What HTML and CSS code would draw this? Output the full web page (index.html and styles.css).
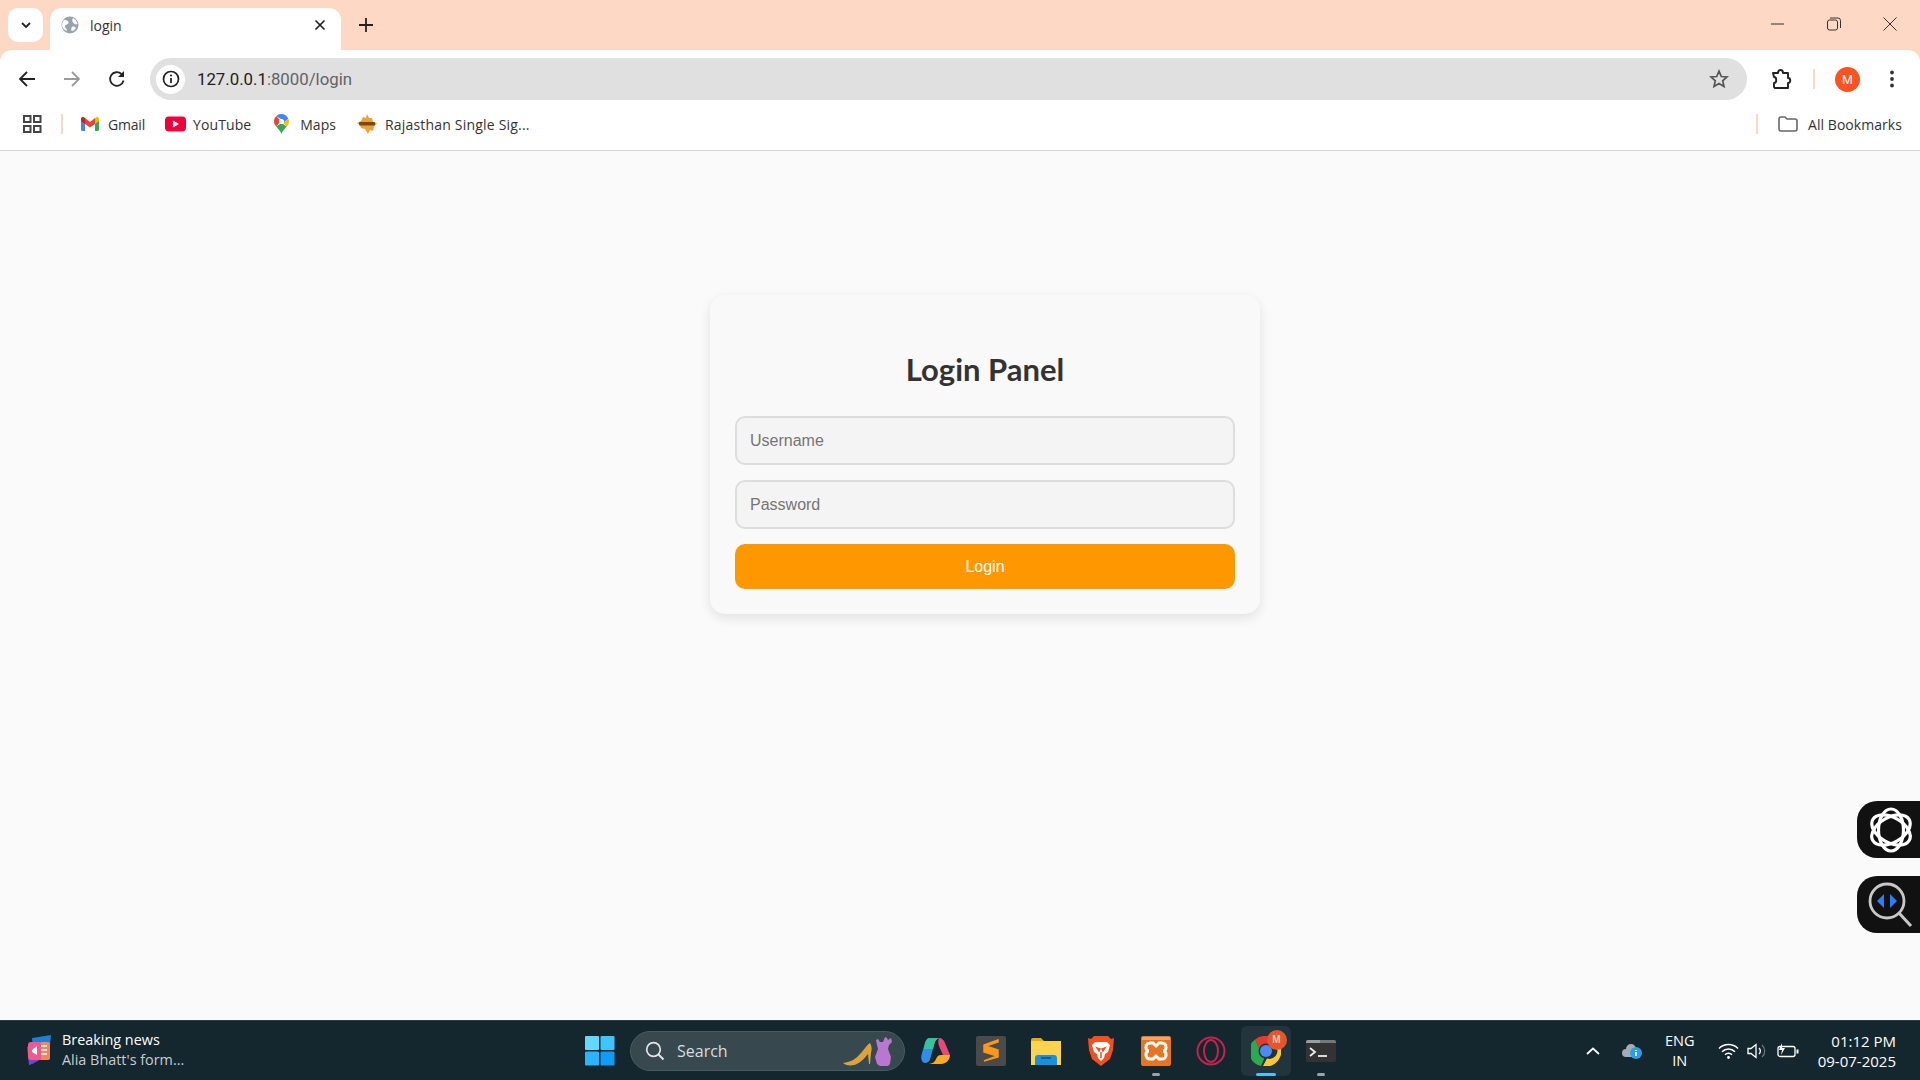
FILE: index.html
```html
<!DOCTYPE html>
<html lang="en">
<head>
<meta charset="utf-8">
<title>login</title>
<link rel="stylesheet" href="styles.css">
</head>
<body>
<div class="browser">
  <header class="tabstrip">
    <button class="tab-search"><svg width="12" height="12" viewBox="0 0 12 12"><path d="M2 4l4 4 4-4" fill="none" stroke="#222" stroke-width="1.8"/></svg></button>
    <div class="tab">
      <svg class="tab-fav" width="18" height="18" viewBox="0 0 18 18"><circle cx="9" cy="9" r="8.500" fill="#9aa3ad"/><path d="M3 4c3 0 5 1 4.500 3s-3 1-3.500 3 2 2 2 5c-3-1-5-3-5-6 0-2 1-4 2-5zM12 2c2 1 4 3 4.500 6-2 1-3 0-4-1s-2-3-.5-5zM11 11c2-1 3 0 4 1-1 2-3 3-4 3s-1-3 0-4z" fill="#fff"/></svg>
      <span class="tab-title">login</span>
      <svg class="tab-close" width="12" height="12" viewBox="0 0 12 12"><path d="M1.500 1.500l9 9M10.500 1.500l-9 9" stroke="#222" stroke-width="1.700"/></svg>
    </div>
    <svg class="new-tab" width="14" height="14" viewBox="0 0 14 14"><path d="M7 0v14M0 7h14" stroke="#222" stroke-width="1.800"/></svg>
    <div class="window-controls">
      <svg width="14" height="14" viewBox="0 0 14 14"><path d="M0 7h13" stroke="#333" stroke-width="1"/></svg>
      <svg width="14" height="14" viewBox="0 0 14 14"><rect x=".5" y="3" width="10" height="10" rx="2" fill="none" stroke="#333"/><path d="M3 1h8a2.500 2.500 0 0 1 2.500 2.500V11" fill="none" stroke="#333"/></svg>
      <svg width="14" height="14" viewBox="0 0 14 14"><path d="M.5.500l13 13M13.500.500l-13 13" stroke="#333" stroke-width="1"/></svg>
    </div>
  </header>

  <div class="toolbar">
    <svg class="nav-icon" width="18" height="18" viewBox="0 0 18 18"><path d="M17 9H2M9 2L2 9l7 7" fill="none" stroke="#222" stroke-width="1.800"/></svg>
    <svg class="nav-icon" width="18" height="18" viewBox="0 0 18 18"><path d="M1 9h15M9 2l7 7-7 7" fill="none" stroke="#9b9b9b" stroke-width="1.800"/></svg>
    <svg class="nav-icon" width="18" height="18" viewBox="0 0 18 18"><path d="M15.500 10.500A6.800 6.800 0 1 1 13.500 4" fill="none" stroke="#222" stroke-width="1.800"/><path d="M16 1v6h-6z" fill="#222"/></svg>
    <div class="omnibox">
      <span class="site-info"><svg width="18" height="18" viewBox="0 0 18 18"><circle cx="9" cy="9" r="7.500" fill="none" stroke="#222" stroke-width="1.700"/><path d="M9 8v5" stroke="#222" stroke-width="1.800"/><circle cx="9" cy="5.500" r="1.100" fill="#222"/></svg></span>
      <span class="url"><span class="url-host">127.0.0.1</span>:8000/login</span>
      <svg class="star" width="20" height="20" viewBox="0 0 20 20"><path d="M10 2.200l2.300 5.300 5.700.5-4.300 3.800 1.300 5.600-5-3-5 3 1.300-5.600L2 8l5.700-.5z" fill="none" stroke="#555" stroke-width="1.700"/></svg>
    </div>
    <svg class="ext" width="22" height="22" viewBox="0 0 22 22"><path d="M2 5h5c0-4 5-4 5 0h5v5c3 0 3 5 0 5v5H4l-1-1v-4c3 0 3-6 0-6z" fill="none" stroke="#222" stroke-width="1.900" stroke-linejoin="round"/></svg>
    <span class="tool-divider"></span>
    <span class="avatar">M</span>
    <svg class="dots" width="6" height="18" viewBox="0 0 6 18"><circle cx="3" cy="2.500" r="1.900" fill="#333"/><circle cx="3" cy="9" r="1.900" fill="#333"/><circle cx="3" cy="15.500" r="1.900" fill="#333"/></svg>
  </div>

  <nav class="bookmarks">
    <svg class="apps" width="19" height="18" viewBox="0 0 19 18"><g fill="none" stroke="#444" stroke-width="2"><rect x="1" y="1" width="6.500" height="6"/><rect x="11" y="1" width="6.500" height="6"/><rect x="1" y="11" width="6.500" height="6"/><rect x="11" y="11" width="6.500" height="6"/></g></svg>
    <span class="bm-divider"></span>
    <a class="bm bm-gmail"><svg width="18" height="14" viewBox="0 0 18 14"><path d="M0 2v10.500A1.500 1.500 0 0 0 1.500 14H4V6z" fill="#4285f4"/><path d="M18 2v10.500a1.500 1.500 0 0 1-1.500 1.500H14V6z" fill="#34a853"/><path d="M14 1v6l4-3V2c0-2-2-2.500-3-1.500z" fill="#fbbc04"/><path d="M4 1v6l5 3.500L14 7V1L9 5z" fill="#ea4335"/><path d="M0 2v2l4 3V1L3 .5C2-.5 0 0 0 2z" fill="#c5221f"/></svg>Gmail</a>
    <a class="bm bm-yt"><svg width="21" height="16" viewBox="0 0 21 16"><rect width="21" height="15" y=".5" rx="4" fill="#f0003c"/><path d="M8 4.500l6 3.500-6 3.500z" fill="#fff"/></svg>YouTube</a>
    <a class="bm bm-maps"><svg width="15" height="20" viewBox="0 0 15 20"><path d="M2.200 12.500C4 15 6.500 16.500 7.500 20c1-3.500 3.500-5.500 5.300-7.500L7.500 9z" fill="#34a853"/><path d="M12.800 12.500C14 11 15 9.500 15 7.500c0-1-.3-2-.8-3L9 9z" fill="#fbbc04"/><path d="M2.200 2.300C.8 3.600 0 5.500 0 7.500c0 2 .9 3.500 2.200 5L7 7z" fill="#ea4335"/><path d="M2.200 2.300C3.500.9 5.400 0 7.500 0c3 0 5.500 1.800 6.700 4.500L9 9 7 5z" fill="#4285f4"/><circle cx="7.500" cy="7.500" r="2.600" fill="#fff"/></svg>Maps</a>
    <a class="bm bm-raj"><svg width="20" height="20" viewBox="0 0 20 20"><path d="M10 0l2 4 3 0 1 4 4 1-3 4-1 4-3-1-2 4-3-5-4-1-1-3-3-2 4-2 2-4 3 1z" fill="#e8a33a"/><rect x="2" y="8" width="16" height="3.500" rx="1" fill="#7a4a12"/></svg>Rajasthan Single Sig...</a>
    <span class="bm-spacer"></span>
    <span class="bm-divider"></span>
    <a class="bm bm-all"><svg width="20" height="16" viewBox="0 0 20 16"><path d="M1 3a2 2 0 0 1 2-2h4l2 2h8a2 2 0 0 1 2 2v8a2 2 0 0 1-2 2H3a2 2 0 0 1-2-2z" fill="none" stroke="#666" stroke-width="1.600"/></svg>All Bookmarks</a>
  </nav>
</div>

<main class="page">
  <form class="card">
    <h1 class="card-title">Login Panel</h1>
    <input class="field" type="text" placeholder="Username">
    <input class="field" type="password" placeholder="Password">
    <button class="submit" type="button">Login</button>
  </form>
  <div class="floaters">
    <div class="floater">
      <svg width="46" height="46" viewBox="0 0 46 46"><g fill="none" stroke="#fff" stroke-width="3.200"><ellipse cx="23" cy="23" rx="21" ry="12.500" transform="rotate(90 23 23)"/><ellipse cx="23" cy="23" rx="21" ry="12.500" transform="rotate(30 23 23)"/><ellipse cx="23" cy="23" rx="21" ry="12.500" transform="rotate(150 23 23)"/></g></svg>
    </div>
    <div class="floater">
      <svg width="46" height="46" viewBox="0 0 46 46"><circle cx="19" cy="19" r="17" fill="none" stroke="#c8c8c8" stroke-width="2.800"/><path d="M31 31l12 13" stroke="#c8c8c8" stroke-width="3"/><path d="M16 12l-7 7 7 7zM22 12l7 7-7 7z" fill="#2f7cf6"/></svg>
    </div>
  </div>
</main>

<footer class="taskbar">
  <div class="news">
    <svg width="26" height="32" viewBox="0 0 26 32"><path d="M6 3l19-3-2 20-15 3z" fill="#1e7fd6"/><path d="M1 12l5-2 2 18-5 2z" fill="#6d48d8"/><path d="M3 25l16-3-11 6-5 2z" fill="#6d48d8"/><rect x="2" y="7" width="22" height="18" rx="3" fill="#ee5a8c"/><path d="M15 7h7a2 2 0 0 1 2 2v14a2 2 0 0 1-2 2h-7z" fill="#f4845a"/><path d="M6 15l5-4v9l-5-3z" fill="#fff"/><path d="M15 11h6M15 15h6M15 19h6" stroke="#fff" stroke-width="1.600"/></svg>
    <div class="news-text">
      <span class="news-head">Breaking news</span>
      <span class="news-sub">Alia Bhatt's form...</span>
    </div>
  </div>
  <div class="task-center">
    <span class="task-slot"><svg width="30" height="30" viewBox="0 0 30 30"><rect width="14" height="14" rx="1" fill="#63d9ff"/><rect x="15.500" width="14" height="14" rx="1" fill="#3fc4fb"/><rect y="15.500" width="14" height="14" rx="1" fill="#2cb4fa"/><rect x="15.500" y="15.500" width="14" height="14" rx="1" fill="#0f9cf5"/></svg></span>
    <div class="searchbox">
      <svg width="20" height="20" viewBox="0 0 20 20"><circle cx="8.500" cy="8.500" r="6.800" fill="none" stroke="#e4e4e4" stroke-width="1.700"/><path d="M13.500 13.500l5 5" stroke="#e4e4e4" stroke-width="1.900"/></svg>
      <span class="search-label">Search</span>
      <svg class="search-art" width="50" height="32" viewBox="0 0 50 32"><path d="M0 28c8-1 13-4 18-10 4-5 7-9 9-10 2 3 2 7 1 10l-1 11h-1l-1-10c-4 5-9 10-14 11-5 1-9 0-11-2z" fill="#dba33c"/><path d="M33 5l2-1 2 3h3l2-5 2 1 1 2 3-2 1 4-3 3-1 4 3 8-1 7-2 2h-8l-3-2-2-7 3-8-1-4z" fill="#b878d0"/></svg>
    </div>
    <span class="task-slot"><svg width="30" height="28" viewBox="0 0 30 28"><path d="M9 1h9c-3 1-4 3-5 7l-3 11c-1 5-3 7-6 7C1 26-1 22 1 16L4 6c1-3 2-5 5-5z" fill="#2f8fe8"/><path d="M9 1h9c-3 1-4 3-5 7l-1 4H3l1-6c1-3 2-5 5-5z" fill="#38c49a"/><path d="M18 1c3 0 5 2 6 5l5 12h-7l-4-9c-1-3-1-6 0-8z" fill="#e84a78"/><path d="M6 27h14c5 0 9-4 9-9h-9c-3 0-4 2-5 4-1 3-4 5-9 5z" fill="#f7a928"/></svg></span>
    <span class="task-slot"><svg width="30" height="30" viewBox="0 0 30 30"><rect width="30" height="30" rx="2" fill="#4a4a4a"/><path d="M22 4L8 9v7l13 4-13 5 14-4v-7L10 10l12-4z" fill="#f8981d" stroke="#f8981d" stroke-width="1.500"/></svg></span>
    <span class="task-slot"><svg width="32" height="28" viewBox="0 0 32 28"><path d="M1 3a2 2 0 0 1 2-2h8l3 3h15a2 2 0 0 1 2 2v4H1z" fill="#e3a91c"/><rect x="1" y="4" width="30" height="24" fill="#ffd34e"/><path d="M5 28V21a3 3 0 0 1 3-3h16a3 3 0 0 1 3 3v7z" fill="#1a90d8"/><rect x="11" y="20" width="10" height="2" fill="#0a5fa8"/></svg></span>
    <span class="task-slot"><svg width="26" height="30" viewBox="0 0 26 30"><path d="M6 0h14l3 3 3-1-1 12-3 9-9 7-9-7-3-9L0 2l3 1z" fill="#f4501e"/><path d="M7 6h12l3 3-2 7-3 2-1 4-3 3-3-3-1-4-3-2-2-7z" fill="#fff"/><path d="M9 12l3 1-1 2zM17 12l-3 1 1 2zM13 16v6" stroke="#f4501e" stroke-width="1.500" fill="none"/></svg></span>
    <span class="task-slot"><svg width="30" height="30" viewBox="0 0 30 30"><rect width="30" height="30" rx="2" fill="#e8751f"/><rect x="1" y="1" width="28" height="3" fill="#f1a36b"/><path d="M9 7h3l3 3 3-3h3a4 4 0 0 1 4 4v1a3 3 0 0 1-3 3 3 3 0 0 1 3 3v1a4 4 0 0 1-4 4h-3l-3-3-3 3H9a4 4 0 0 1-4-4v-1a3 3 0 0 1 3-3 3 3 0 0 1-3-3v-1a4 4 0 0 1 4-4z" fill="none" stroke="#fff" stroke-width="3"/></svg><i class="run-dot"></i></span>
    <span class="task-slot"><svg width="30" height="30" viewBox="0 0 30 30"><circle cx="15" cy="15" r="13.500" fill="none" stroke="#c2244f" stroke-width="2"/><ellipse cx="15" cy="15" rx="7" ry="11" fill="none" stroke="#c2244f" stroke-width="2"/></svg></span>
    <span class="task-slot task-active"><svg width="30" height="30" viewBox="0 0 30 30"><path d="M15 0a15 15 0 0 1 13 7.500H15A7.500 7.500 0 0 0 8.300 12L4 3.500A15 15 0 0 1 15 0z" fill="#e33b2e"/><path d="M4 3.500L8.300 12a7.500 7.500 0 0 0 5 10.500L10 30A15 15 0 0 1 4 3.500z" fill="#2da94f"/><path d="M28 7.500A15 15 0 0 1 12 30l4-7.500a7.500 7.500 0 0 0 5-15z" fill="#fcc934"/><circle cx="15" cy="15" r="6" fill="#4c8bf5"/></svg><b class="chrome-badge">M</b><i class="run-bar"></i></span>
    <span class="task-slot"><svg width="30" height="24" viewBox="0 0 30 24"><rect width="30" height="22" y="1" rx="2" fill="#333"/><path d="M0 3a2 2 0 0 1 2-2h12v3H0z" fill="#9c9c9c"/><path d="M14 1h14a2 2 0 0 1 2 2v1H14z" fill="#777"/><path d="M4 9l5 4-5 4" fill="none" stroke="#eee" stroke-width="1.800"/><path d="M12 17h9" stroke="#eee" stroke-width="1.800"/></svg><i class="run-dot"></i></span>
  </div>
  <div class="tray">
    <svg class="tray-chevron" width="14" height="8" viewBox="0 0 14 8"><path d="M1 7l6-5.500L13 7" fill="none" stroke="#fff" stroke-width="1.700"/></svg>
    <svg class="tray-cloud" width="20" height="16" viewBox="0 0 20 16"><path d="M4 14a4 4 0 0 1 0-8 5 5 0 0 1 10 0h2v8z" fill="#a6adb2"/><circle cx="14" cy="10" r="6" fill="#2b9fe6"/><path d="M14 9v4M14 7v1" stroke="#fff" stroke-width="1.500"/></svg>
    <div class="lang"><span>ENG</span><span>IN</span></div>
    <svg class="tray-wifi" width="21" height="16" viewBox="0 0 21 16"><path d="M1 5.500a13.500 13.500 0 0 1 19 0M4 8.800a9 9 0 0 1 13 0M7 11.800a4.500 4.500 0 0 1 7 0" fill="none" stroke="#fff" stroke-width="1.500"/><circle cx="10.500" cy="14.500" r="1.400" fill="#fff"/></svg>
    <svg class="tray-vol" width="20" height="16" viewBox="0 0 20 16"><path d="M1 5.500h3L9 1.500v13l-5-4H1z" fill="none" stroke="#fff" stroke-width="1.300"/><path d="M12 5a4 4 0 0 1 0 6" fill="none" stroke="#fff" stroke-width="1.300"/><path d="M15 2a8 8 0 0 1 0 12" fill="none" stroke="#6e7a80" stroke-width="1.200"/></svg>
    <svg class="tray-batt" width="22" height="16" viewBox="0 0 22 16"><rect x="1" y="3.500" width="17" height="10" rx="2" fill="none" stroke="#fff" stroke-width="1.300"/><path d="M19.500 6.500h2v4h-2z" fill="#fff"/><path d="M5 0L2 7h3l-1 5 4-7H5z" fill="#fff"/></svg>
    <div class="clock"><span>01:12 PM</span><span>09-07-2025</span></div>
  </div>
</footer>
</body>
</html>
```
FILE: styles.css
```css
* { box-sizing: border-box; }
html, body { margin: 0; height: 100%; }
body {
  display: flex;
  flex-direction: column;
  height: 1080px;
  overflow: hidden;
  background: #fafafa;
  font-family: "Open Sans", "Liberation Sans", sans-serif;
}
svg { display: block; flex: none; }

.browser { background: #fdd9c5; flex: none; }
.tabstrip { height: 50px; display: flex; align-items: flex-start; padding-left: 8px; }
.tab-search {
  width: 35px; height: 34px; margin-top: 8px; padding: 0; border: 0;
  background: #fff; border-radius: 10px;
  display: flex; align-items: center; justify-content: center;
}
.tab {
  width: 291px; height: 42px; margin: 8px 0 0 7px; background: #fff;
  border-radius: 12px 12px 0 0;
  display: flex; align-items: center; padding: 0 15px 8px 11px;
}
.tab-title { flex: 1; margin-left: 11px; font-size: 14px; color: #333; font-family: "Open Sans", sans-serif; }
.new-tab { margin: 18px 0 0 18px; }
.window-controls { margin: 17px 21px 0 auto; display: flex; gap: 42px; width: 128px; }

.toolbar {
  height: 50px; background: #fff; border-radius: 12px 12px 0 0;
  display: flex; align-items: center; padding: 8px 0 0 18px;
}
.nav-icon { margin-right: 27px; }
.nav-icon:nth-child(3) { margin-right: 24px; }
.omnibox {
  width: 1597px; height: 42px; background: #e0e0e0; border-radius: 21px;
  display: flex; align-items: center; padding: 0 18px 0 6px;
}
.site-info {
  width: 29px; height: 29px; border-radius: 50%; background: #fff;
  display: flex; align-items: center; justify-content: center;
}
.url { flex: 1; margin-left: 12px; font-size: 16.800px; color: #5f6368; font-family: "Roboto", sans-serif; }
.url-host { color: #222; }
.ext { margin: 0 0 0 24px; }
.tool-divider { width: 2px; height: 20px; margin: 0 0 0 20px; background: #fdd9c5; }
.avatar {
  width: 25px; height: 25px; border-radius: 50%; margin: 0 0 0 20px; background: #fb5220;
  color: #fff; font-size: 13px; display: flex; align-items: center; justify-content: center;
  font-family: "Liberation Sans", sans-serif;
}
.dots { margin: 0 0 0 29px; }

.bookmarks {
  height: 51px; background: #fff; border-bottom: 1px solid #d4d4d4;
  display: flex; align-items: center; padding: 0 18px 2px 23px;
  font-size: 14px; color: #333; font-family: "Open Sans", sans-serif;
}
.apps { margin-right: 19px; }
.bm-divider { width: 2px; height: 20px; background: #fdd9c5; }
.bm { display: flex; align-items: center; white-space: nowrap; }
.bm-gmail { margin-left: 18px; gap: 9px; letter-spacing: -.2px; }
.bm-yt { margin-left: 20px; gap: 7px; letter-spacing: .1px; }
.bm-maps { margin-left: 23px; gap: 11px; }
.bm-raj { margin-left: 21px; gap: 8px; letter-spacing: .2px; }
.bm-spacer { flex: 1; }
.bm-all { margin-left: 20px; gap: 10px; letter-spacing: .05px; }

.page {
  flex: 1; position: relative; background: #fafafa;
  display: flex; justify-content: center; align-items: flex-start; padding: 144px 0 0 50px;
}
.card {
  width: 550px; height: 319px; padding: 25px; background: #f9f9f9;
  border-radius: 15px; box-shadow: 0 4px 12px rgba(0, 0, 0, .1);
  display: flex; flex-direction: column;
}
.card-title {
  margin: 21px 0 20px; height: 55px; line-height: 56px; text-align: center;
  font-family: "Comic Sans MS", "Lato", sans-serif; font-weight: 700; font-size: 31px; color: #333;
}
.field {
  width: 100%; height: 49px; margin: 0 0 15px; padding: 0 13px;
  background: #f4f4f4; border: 2px solid #ddd; border-radius: 10px;
  font-family: "Liberation Sans", sans-serif; font-size: 16px; outline: 0;
}
.submit {
  width: 100%; height: 45px; flex: none; border: 0; border-radius: 10px; background: #ff9800; color: #fff;
  font-family: "Liberation Sans", sans-serif; font-size: 16px;
}
.floaters {
  position: absolute; right: 0; top: 650px; display: flex; flex-direction: column; gap: 18px;
}
.floater {
  width: 63px; height: 57px; background: #111; border-radius: 20px 0 0 20px;
  display: flex; align-items: center; padding-left: 11px;
}

.taskbar {
  height: 60px; flex: none; background: #14262e; border-top: 1px solid #2d3b42;
  display: grid; grid-template-columns: 572px auto 1fr; align-items: center; color: #fff;
}
.news { display: flex; align-items: center; gap: 10px; padding-left: 26px; }
.news-text { display: flex; flex-direction: column; font-size: 14.400px; line-height: 20px; margin-top: -2px; }
.news-sub { color: #c9cdcf; }
.task-center { display: flex; align-items: center; }
.task-slot {
  width: 55px; height: 50px; position: relative;
  display: flex; align-items: center; justify-content: center;
}
.searchbox {
  width: 275px; height: 40px; margin: 0 3px; padding: 0 11px 0 14px;
  background: #37494f; border: 1px solid #4a5b60; border-radius: 20px;
  display: flex; align-items: center;
}
.search-label { flex: 1; margin-left: 12px; font-size: 16px; color: #d8dcdd; }
.task-active { background: #22343c; border-radius: 6px; width: 50px; margin: 0 2.500px; }
.chrome-badge {
  position: absolute; top: 4px; right: 4px; width: 20px; height: 20px; border-radius: 50%;
  background: #e4572a; color: #f5c9b5; font: 700 10px/20px "Liberation Sans", sans-serif; text-align: center;
}
.run-dot {
  position: absolute; bottom: 0; left: 50%; width: 8px; height: 3px; margin-left: -4px;
  border-radius: 2px; background: #9aa3a8;
}
.run-bar {
  position: absolute; bottom: 0; left: 50%; width: 20px; height: 3px; margin-left: -10px;
  border-radius: 2px; background: #4cc2ff;
}
.tray { display: flex; align-items: center; justify-content: flex-end; padding-right: 24px; }
.tray-cloud { margin-left: 22px; }
.lang {
  display: flex; flex-direction: column; align-items: center; width: 36px; margin-left: 20px;
  font-size: 14.500px; line-height: 20px;
}
.tray-wifi { margin-left: 20px; }
.tray-vol { margin-left: 8px; }
.tray-batt { margin-left: 10px; }
.clock {
  display: flex; flex-direction: column; align-items: flex-end; margin-left: 19px;
  font-size: 15px; line-height: 20px;
}
```
